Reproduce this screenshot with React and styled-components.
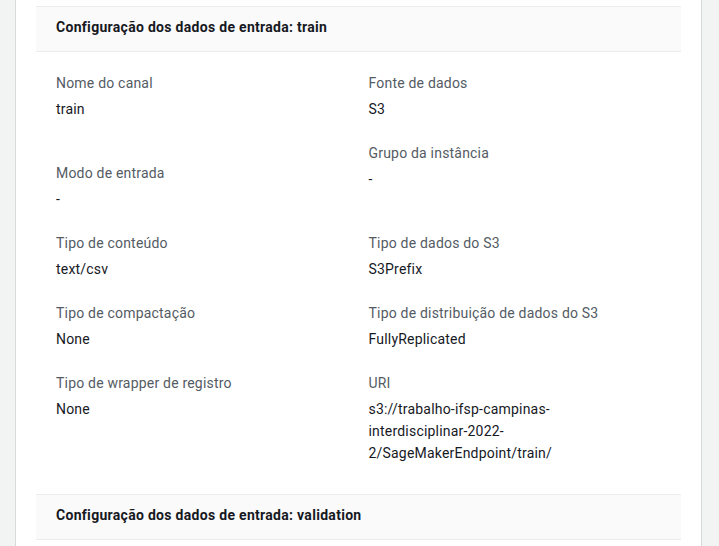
import React from "react";
import styled, { createGlobalStyle } from "styled-components";

const Global = createGlobalStyle`
  html, body { margin: 0; padding: 0; height: 100%; overflow: hidden; }
  body {
    background: #f2f3f3;
    font-family: Roboto, "Liberation Sans", Arial, sans-serif;
    font-size: 14px;
    letter-spacing: 0.2px;
    color: #16191f;
  }
`;

const Page = styled.div`
  display: flex;
  padding: 0 17px 0 15px;
  height: 546px;
`;

const Card = styled.div`
  flex: 1;
  background: #ffffff;
  border-left: 1px solid #d5dbdb;
  border-right: 1px solid #d5dbdb;
  padding: 6px 20px 0;
  display: flex;
  flex-direction: column;
`;

const SectionHeader = styled.div`
  background: #fafafa;
  border-top: 1px solid #eaeded;
  border-bottom: 1px solid #eaeded;
  padding: 9px 20px 13px;
  line-height: 22px;
  font-weight: 700;
  font-size: 14px;
  letter-spacing: 0.3px;
  color: #16191f;
`;

const Body = styled.div`
  display: grid;
  grid-template-columns: 1fr 1fr;
  column-gap: 20px;
  row-gap: 22px;
  padding: 20px 20px 30px;
`;

const Item = styled.div`
  display: flex;
  flex-direction: column;
  gap: 4px;
  padding-top: ${(p) => (p.$pushed ? "20px" : "0")};
  min-width: 0;
`;

const Label = styled.div`
  color: #545b64;
  line-height: 22px;
`;

const Value = styled.div`
  color: #16191f;
  line-height: 22px;
  overflow-wrap: break-word;
  max-width: ${(p) => (p.$narrow ? "225px" : "none")};
`;

const fields = [
  { label: "Nome do canal", value: "train" },
  { label: "Fonte de dados", value: "S3" },
  { label: "Modo de entrada", value: "-", pushed: true },
  { label: "Grupo da instância", value: "-" },
  { label: "Tipo de conteúdo", value: "text/csv" },
  { label: "Tipo de dados do S3", value: "S3Prefix" },
  { label: "Tipo de compactação", value: "None" },
  { label: "Tipo de distribuição de dados do S3", value: "FullyReplicated" },
  { label: "Tipo de wrapper de registro", value: "None" },
  {
    label: "URI",
    value: "s3://trabalho-ifsp-campinas-interdisciplinar-2022-2/SageMakerEndpoint/train/",
    narrow: true,
  },
];

export default function App() {
  return (
    <>
      <Global />
      <Page>
        <Card>
          <SectionHeader>Configuração dos dados de entrada: train</SectionHeader>
          <Body>
            {fields.map((f) => (
              <Item key={f.label} $pushed={f.pushed}>
                <Label>{f.label}</Label>
                <Value $narrow={f.narrow}>{f.value}</Value>
              </Item>
            ))}
          </Body>
          <SectionHeader>Configuração dos dados de entrada: validation</SectionHeader>
        </Card>
      </Page>
    </>
  );
}
